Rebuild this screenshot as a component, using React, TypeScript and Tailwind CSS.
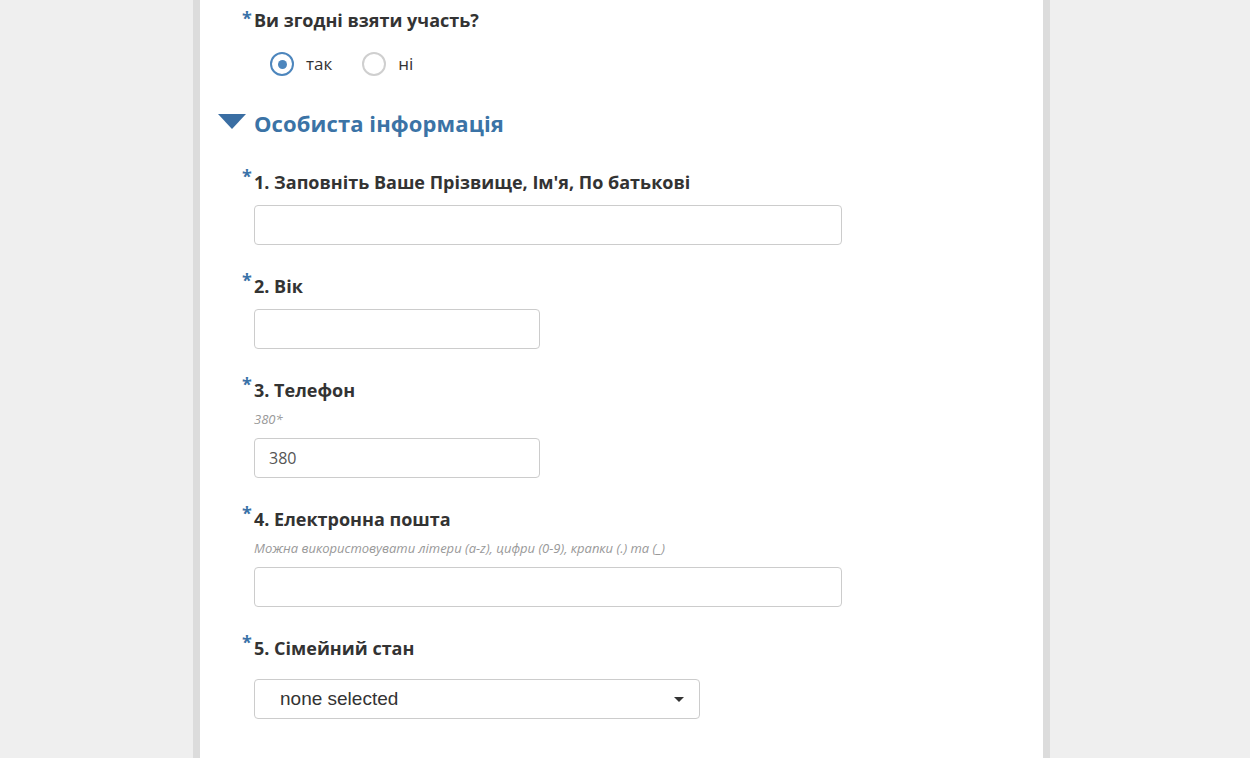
import React from "react";

const Star = ({ sup = true }: { sup?: boolean }) => (
  <span
    className={`inline-block w-[12px] text-[#3a72a8] font-bold ${
      sup ? "relative -top-[6px] text-[18px]" : "text-[18px]"
    }`}
  >
    *
  </span>
);

const Label = ({ text }: { text: string }) => (
  <div className="flex items-start h-[26px] leading-[26px] text-[18px] font-bold text-[#333] pl-[42px]">
    <Star />
    <span>{text}</span>
  </div>
);

const Hint = ({ text }: { text: string }) => (
  <div className="pl-[54px] h-[18px] leading-[18px] text-[13px] italic text-[#999]">{text}</div>
);

const Input = ({ w, value }: { w: string; value?: string }) => (
  <div className="pl-[54px]">
    <div
      className={`${w} h-[40px] rounded-[4px] border border-[#ccc] bg-white flex items-center px-[14px] text-[16px] text-[#555]`}
    >
      {value}
    </div>
  </div>
);

export default function App() {
  return (
    <div
      className="w-[1250px] h-[758px] bg-[#efefef] overflow-hidden"
      style={{ fontFamily: '"Open Sans", "Noto Sans", sans-serif' }}
    >
      <div className="ml-[193px] w-[857px] h-[758px] border-x-[7px] border-[#dcdcdc] bg-white pt-[7px]">
        {/* Question */}
        <div className="flex items-center h-[26px] leading-[26px] text-[18px] font-bold text-[#333] pl-[42px]">
          <span className="inline-block w-[12px] text-[#3a72a8] text-[18px] relative -top-[2px]">*</span>
          <span>Ви згодні взяти участь?</span>
        </div>
        <div className="mt-[19px] h-[24px] flex items-center pl-[70px] text-[17px] text-[#333]">
          <span className="w-[24px] h-[24px] rounded-full border-[2px] border-[#4d86bd] flex items-center justify-center">
            <span className="w-[9px] h-[9px] rounded-full bg-[#4d86bd]" />
          </span>
          <span className="ml-[12px]">так</span>
          <span className="ml-[30px] w-[24px] h-[24px] rounded-full border-[2px] border-[#cfcfcf]" />
          <span className="ml-[12px]">ні</span>
        </div>

        {/* Heading */}
        <div className="mt-[32px] h-[30px] flex items-center pl-[18px]">
          <svg width="28" height="16" viewBox="0 0 28 16" className="mr-[8px] -mt-[2px]">
            <polygon points="0,0 28,0 14,15" fill="#3a6ea3" />
          </svg>
          <span className="text-[22px] font-bold text-[#3b73a6] leading-[30px] tracking-[0.1px]">Особиста інформація</span>
        </div>

        <div className="mt-[31px]">
          <Label text="1. Заповніть Ваше Прізвище, Ім'я, По батькові" />
          <div className="mt-[10px]">
            <Input w="w-[588px]" />
          </div>
        </div>

        <div className="mt-[28px]">
          <Label text="2. Вік" />
          <div className="mt-[10px]">
            <Input w="w-[286px]" />
          </div>
        </div>

        <div className="mt-[28px]">
          <Label text="3. Телефон" />
          <div className="mt-[7px]">
            <Hint text="380*" />
          </div>
          <div className="mt-[10px]">
            <Input w="w-[286px]" value="380" />
          </div>
        </div>

        <div className="mt-[28px]">
          <Label text="4. Електронна пошта" />
          <div className="mt-[7px]">
            <Hint text="Можна використовувати літери (a-z), цифри (0-9), крапки (.) та (_)" />
          </div>
          <div className="mt-[10px]">
            <Input w="w-[588px]" />
          </div>
        </div>

        <div className="mt-[28px]">
          <Label text="5. Сімейний стан" />
          <div className="mt-[18px] pl-[54px]">
            <div
              className="w-[446px] h-[40px] rounded-[4px] border border-[#ccc] bg-white flex items-center justify-between pl-[25px] pr-[15px] text-[19px] text-[#333]"
              style={{ fontFamily: '"Liberation Sans", Arial, sans-serif' }}
            >
              <span>none selected</span>
              <svg width="10" height="5" viewBox="0 0 10 5">
                <polygon points="0,0 10,0 5,5" fill="#333" />
              </svg>
            </div>
          </div>
        </div>
      </div>
    </div>
  );
}
